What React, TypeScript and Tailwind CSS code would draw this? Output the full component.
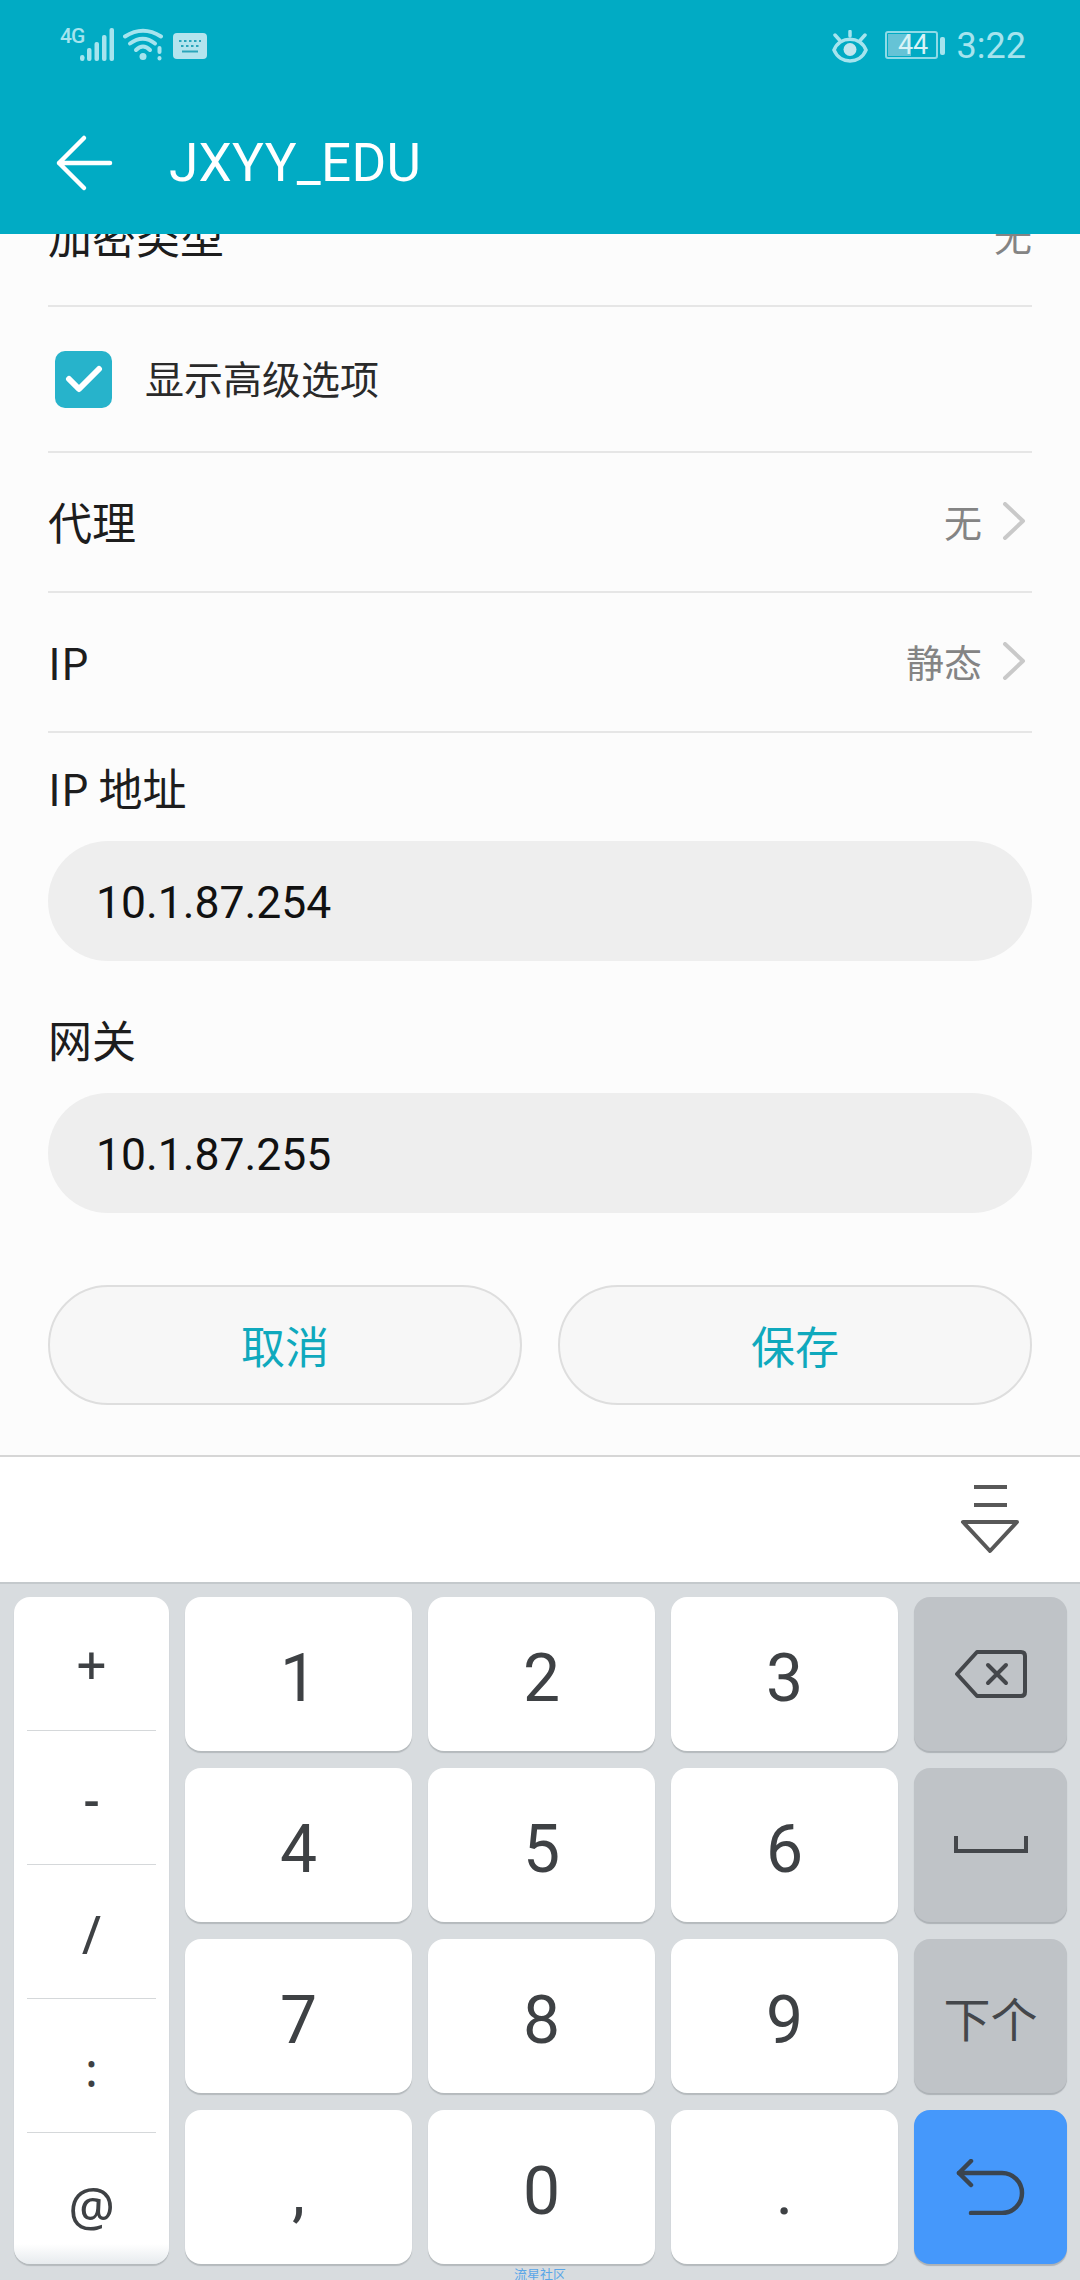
import React from "react";

const cjk = "font-['Noto_Sans_CJK_SC','Noto_Sans',sans-serif]";
const latin = "font-['Roboto','Noto_Sans_CJK_SC',sans-serif]";

const StatusBar = () => (
  <div className="flex h-[78px] items-start justify-between pl-[60px] pr-[54px] pt-[28px] text-[#a6e4ee]">
    <div className="flex items-start">
      <span className="w-[18px] font-['Roboto'] text-[21px] font-medium leading-[16px] tracking-[-1px]">4G</span>
      <svg width="36" height="33" viewBox="0 0 36 33" className="ml-[1px]" fill="currentColor">
        <rect x="1" y="27" width="4.5" height="6" rx="2.2" />
        <rect x="8" y="20" width="4.5" height="13" rx="2" />
        <rect x="15.5" y="14" width="4.5" height="19" rx="2" />
        <rect x="23" y="7" width="4.5" height="26" rx="2" />
        <rect x="30.5" y="0" width="4.5" height="33" rx="2" />
      </svg>
      <svg width="41" height="33" viewBox="0 0 41 33" className="ml-[8px]" fill="none" stroke="currentColor" strokeWidth="4" strokeLinecap="round">
        <path d="M2 8.5Q20 -3 38 8.5" />
        <path d="M7 15.5Q20 6 32 15.5" />
        <path d="M13 22Q20 15 27 22" />
        <circle cx="20" cy="28.5" r="3.5" fill="currentColor" stroke="none" />
        <path d="M36.5 20V24" />
        <path d="M36.5 30V30.5" />
      </svg>
      <svg width="34" height="26" viewBox="0 0 34 26" className="ml-[9px] mt-[5px]">
        <rect width="34" height="26" rx="4" fill="#b3e4ee" />
        <path d="M6 8H28M8 13H26" stroke="#2aa6bb" strokeWidth="2" strokeDasharray="2.5 2.5" />
        <path d="M9 18.5H25" stroke="#2aa6bb" strokeWidth="2" />
      </svg>
    </div>
    <div className="flex items-start">
      <svg width="36" height="33" viewBox="0 0 36 33" className="mt-[2px]" fill="none" stroke="currentColor" strokeWidth="3.5" strokeLinecap="round">
        <path d="M2 20C8 5.500 28 5.500 34 20C28 34.500 8 34.500 2 20Z" />
        <circle cx="18" cy="19.500" r="6.500" fill="#c3e6ee" stroke="none" />
        <path d="M18 1.500V6M3 5L7.500 10M33 5L28.500 10" />
      </svg>
      <div className="relative ml-[17px] mt-[3px] flex h-[28px] w-[53px] items-center justify-center rounded-[3px] border-2 border-[#8fdbe7]">
        <div className="absolute bottom-[1px] left-[1px] top-[1px] w-[23px] bg-[#65c3d6]" />
        <span className="relative pl-[4px] font-['Roboto'] text-[27px] leading-none text-[#d9f3f7]">44</span>
      </div>
      <div className="ml-[2px] mt-[9px] h-[18px] w-[5px] rounded-[2px] bg-[#a6e4ee]" />
      <span className="ml-[12px] font-['Roboto'] text-[36px] leading-[36px]">3:22</span>
    </div>
  </div>
);

const Header = () => (
  <div className="relative z-10 h-[234px] shrink-0 bg-[#01abc4]">
    <StatusBar />
    <div className="flex h-[156px] items-center pl-[54px] pt-[14px] text-white">
      <svg width="60" height="60" viewBox="0 0 60 60" fill="none" stroke="currentColor" strokeWidth="4.500" strokeLinecap="round" strokeLinejoin="round">
        <path d="M5 30H56M30 5L5 30L30 55" />
      </svg>
      <span className={`${latin} ml-[55px] text-[53px] leading-none tracking-[0.3px]`}>JXYY_EDU</span>
    </div>
  </div>
);

const Chevron = () => (
  <svg width="24" height="38" viewBox="0 0 24 38" className="ml-[20px] mr-[6px]" fill="none" stroke="#c9c9c9" strokeWidth="4" strokeLinecap="round" strokeLinejoin="round">
    <path d="M3 2L21 19L3 36" />
  </svg>
);

const Row = ({ label, value, arrow }: { label: string; value: string; arrow?: boolean }) => (
  <div className="flex h-[140px] items-center justify-between border-b-2 border-[#e6e6e6] pb-[2px]">
    <span className={`${cjk} text-[44px] leading-none text-[#1d1d1d]`}>{label}</span>
    <div className="flex items-center">
      <span className={`${cjk} text-[38px] leading-none text-[#848484]`}>{value}</span>
      {arrow && <Chevron />}
    </div>
  </div>
);

const Field = ({ label, value, top }: { label: string; value: string; top: string }) => (
  <div className={top}>
    <div className={`${cjk} mb-[24px] flex h-[60px] items-center text-[44px] leading-none text-[#1d1d1d]`}>{label}</div>
    <div className="flex h-[120px] items-center rounded-full bg-[#eeeeee] pl-[48px] pt-[4px]">
      <span className="font-['Roboto'] text-[44.5px] leading-none text-[#111111]">{value}</span>
    </div>
  </div>
);

const ActionButton = ({ label }: { label: string }) => (
  <div className={`${cjk} flex h-[120px] flex-1 items-center justify-center rounded-full border-2 border-[#dedede] bg-[#f7f7f7] text-[44px] leading-none text-[#0fa9bd]`}>
    {label}
  </div>
);

const Form = () => (
  <div className="h-[1221px] shrink-0 overflow-hidden bg-[#fcfcfc] px-[48px]">
    <div className="-mt-[67px]">
      <Row label="加密类型" value="无" />
      <div className="flex h-[146px] items-center border-b-2 border-[#e6e6e6] pl-[7px]">
        <div className="flex h-[57px] w-[57px] items-center justify-center rounded-[10px] bg-[#27b3cb]">
          <svg width="38" height="30" viewBox="0 0 38 30" fill="none" stroke="white" strokeWidth="6" strokeLinecap="round" strokeLinejoin="round">
            <path d="M4 15L14 25L34 5" />
          </svg>
        </div>
        <span className={`${cjk} ml-[33px] pb-[4px] text-[39px] leading-none text-[#2a2a2a]`}>显示高级选项</span>
      </div>
      <Row label="代理" value="无" arrow />
      <Row label="IP" value="静态" arrow />
      <Field label="IP 地址" value="10.1.87.254" top="pt-[24px]" />
      <Field label="网关" value="10.1.87.255" top="pt-[48px]" />
      <div className="mt-[72px] flex gap-[36px]">
        <ActionButton label="取消" />
        <ActionButton label="保存" />
      </div>
    </div>
  </div>
);

const Toolbar = () => (
  <div className="flex h-[129px] shrink-0 items-center justify-end border-y-2 border-t-[#d6d6d6] border-b-[#c4c9cc] bg-white pr-[60px]">
    <svg width="60" height="70" viewBox="0 0 60 70" fill="none" stroke="#585858" strokeWidth="4">
      <path d="M14 2H47M14 20H47" />
      <path d="M3 37H57L30 66Z" strokeLinejoin="round" />
    </svg>
  </div>
);

const keyShadow = "shadow-[0_2px_1px_#b5babd]";

const Key = ({ label }: { label: string }) => (
  <div className={`flex items-center justify-center rounded-[16px] bg-white pt-[9px] font-['Roboto'] text-[66px] leading-none text-[#3e4144] ${keyShadow}`}>
    {label}
  </div>
);

const FnKey = ({ children, blue }: { children: React.ReactNode; blue?: boolean }) => (
  <div className={`flex items-center justify-center rounded-[16px] shadow-[0_2px_1px_#adb2b6] ${blue ? "bg-[#4598fb]" : "bg-[#bfc3c7]"}`}>
    {children}
  </div>
);

// the symbol glyphs sit at different heights in the column, so each cell gets its own size and offset
const symbols = [
  { s: "+", cell: "h-[134px] border-b border-[#d5d8da]", text: "text-[54px] font-medium" },
  { s: "-", cell: "h-[134px] border-b border-[#d5d8da]", text: "text-[50px] font-medium" },
  { s: "/", cell: "h-[134px] border-b border-[#d5d8da] pt-[4px]", text: "text-[52px]" },
  { s: ":", cell: "h-[134px] border-b border-[#d5d8da] pt-[6px]", text: "text-[48px]" },
  { s: "@", cell: "flex-1 pt-[15px]", text: "text-[52px]" },
];

const Keyboard = () => (
  <div className="flex-1 bg-[#d8dcdf] px-[14px] pt-[13px]">
    <div className="grid grid-cols-[155px_227px_227px_227px_153px] grid-rows-[154px_154px_154px_154px] gap-x-[16px] gap-y-[17px]">
      <div className={`row-span-4 flex flex-col rounded-[16px] bg-linear-to-b from-white from-[97%] to-[#e7ebee] px-[13px] ${keyShadow}`}>
        {symbols.map(({ s, cell, text }) => (
          <div key={s} className={`flex items-center justify-center ${cell}`}>
            <span className={`font-['Noto_Sans'] leading-none text-[#3e4144] ${text}`}>{s}</span>
          </div>
        ))}
      </div>
      <Key label="1" />
      <Key label="2" />
      <Key label="3" />
      <FnKey>
        <svg width="72" height="48" viewBox="0 0 72 48" fill="none" stroke="#44474b" strokeWidth="4" strokeLinecap="round" strokeLinejoin="round">
          <path d="M22 2H66Q70 2 70 6V42Q70 46 66 46H22L2 24Z" />
          <path d="M33 15L51 33M51 15L33 33" />
        </svg>
      </FnKey>
      <Key label="4" />
      <Key label="5" />
      <Key label="6" />
      <FnKey>
        <svg width="74" height="18" viewBox="0 0 74 18" fill="none" stroke="#44474b" strokeWidth="4">
          <path d="M2 0V15H72V0" />
        </svg>
      </FnKey>
      <Key label="7" />
      <Key label="8" />
      <Key label="9" />
      <FnKey>
        <span className={`${cjk} text-[47px] leading-none text-[#44474b]`}>下个</span>
      </FnKey>
      <Key label="," />
      <Key label="0" />
      <Key label="." />
      <FnKey blue>
        <svg width="70" height="56" viewBox="0 0 70 56" fill="none" stroke="#3a4550" strokeWidth="4.500" strokeLinecap="round" strokeLinejoin="round">
          <path d="M3 14H46A20 20 0 0 1 46 54H15" />
          <path d="M15 2L3 14L15 26" />
        </svg>
      </FnKey>
    </div>
    <div className={`${cjk} mt-[4px] text-center text-[13px] leading-[12px] text-[#5aa6e8]`}>流星社区</div>
  </div>
);

export default function App() {
  return (
    <div className="flex h-[2280px] w-[1080px] flex-col overflow-hidden">
      <Header />
      <Form />
      <Toolbar />
      <Keyboard />
    </div>
  );
}
